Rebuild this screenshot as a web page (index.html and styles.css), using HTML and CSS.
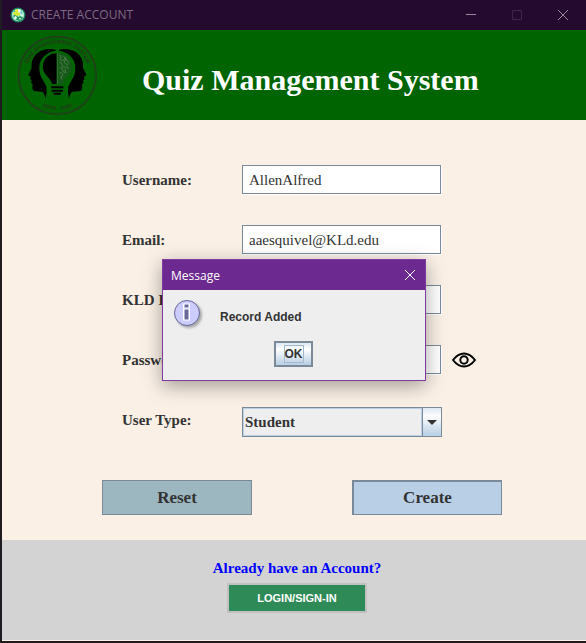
FILE: index.html
```html
<!DOCTYPE html>
<html lang="en">
<head>
<meta charset="utf-8">
<title>Create Account</title>
<link rel="stylesheet" href="styles.css">
</head>
<body>
<div class="window">
  <header class="titlebar">
    <svg class="app-icon" viewBox="0 0 16 16" aria-hidden="true">
      <circle cx="8" cy="8" r="7.5" fill="#16805a"/>
      <circle cx="8" cy="8" r="6.2" fill="#a6e3c8"/>
      <path d="M3 9l3-2 2 3 3-1 2 2-3 3-4-1z" fill="#24965c"/>
      <path d="M4 4l3-2 3 2v4l-3 1-4-2z" fill="#d9ea35"/>
      <path d="M8 2l3 1-1 3-2-1zM5 9l2 1-1 3-2-2zM10 7l3 1-1 2zM9 11l2 0-1 2z" fill="#eefcf8"/>
      <path d="M3 5l2-2v2zM10 4l2 1v2z" fill="#22b5cf"/>
    </svg>
    <span class="titlebar-text">CREATE ACCOUNT</span>
    <div class="window-controls">
      <button type="button" aria-label="Minimize"><svg viewBox="0 0 10 10"><path d="M0 4.5h10"/></svg></button>
      <button type="button" class="dim" aria-label="Maximize" disabled><svg viewBox="0 0 10 10"><path d="M.5.5h9v9h-9z"/></svg></button>
      <button type="button" aria-label="Close"><svg viewBox="0 0 10 10"><path d="M0 0l10 10M10 0L0 10"/></svg></button>
    </div>
  </header>

  <div class="banner">
    <svg class="logo" viewBox="20 10 243 243" role="img" aria-label="Quiz Management System logo">
      <defs>
        <path id="ring-top" d="M45 131a96 96 0 0 1 192 0"/>
        <path id="ring-bottom" d="M37 131a104 104 0 0 0 208 0"/>
        <g id="head">
          <path d="M136 54C112 48 88 54 75 70C64 83 63 97 64 109L54 129Q53 133 61 134L60 143L64 147L62 153L67 158Q64 173 71 178L96 180Q103 185 106 201Q111 181 108 165Q103 154 96 142Q86 128 87 106C88 82 106 61 136 57Z"/>
        </g>
      </defs>
      <circle cx="141" cy="131" r="117" fill="none" stroke="#26391f" stroke-width="4"/>
      <circle cx="141" cy="131" r="113" fill="none" stroke="#154d13" stroke-width="2"/>
      <g class="ring-text">
        <text><textPath href="#ring-top" startOffset="50%" text-anchor="middle">QUIZ MANAGEMENT SYSTEM</textPath></text>
        <text><textPath href="#ring-bottom" startOffset="50%" text-anchor="middle">ESTD · 2022</textPath></text>
      </g>
      <use href="#head"/>
      <use href="#head" transform="matrix(-1 0 0 1 282 0)"/>
      <path d="M139 65C112 66 95 86 98 111C101 130 121 138 125 157H139Z"/>
      <path d="M143 65C170 66 187 86 184 111C181 130 161 138 157 157H143Z" fill="#17591a"/>
      <path d="M147 70q9 3 4 9t4 8q9-2 11-11M170 82q-10 3-8 10t11 6M147 92q8 0 8 8t10 6q9-2 9 6M147 108q11-2 10 7t10 7M147 124q8-4 10 3t-8 9M166 111q-5 6 2 12M154 144v-8M160 74q6 8 16 20" fill="none" stroke="#5c8b55" stroke-width="2"/>
      <path d="M141 65v92" stroke="#4b7948" stroke-width="2"/>
      <path d="M123 164h36v6h-36zM124 174h34v6h-34zM130 183h22v6h-22z"/>
    </svg>
    <h1>Quiz Management System</h1>
  </div>

  <form class="account-form">
    <div class="row"><label for="username">Username:</label><input id="username" type="text" value="AllenAlfred"></div>
    <div class="row"><label for="email">Email:</label><input id="email" type="text" value="aaesquivel@KLd.edu"></div>
    <div class="row"><label for="kld-id">KLD ID:</label><input id="kld-id" type="text"></div>
    <div class="row">
      <label for="password">Password:</label><input id="password" type="password">
      <button class="reveal" type="button" aria-label="Show password">
        <svg viewBox="0 0 26 18"><path d="M2 9Q7 2.500 13 2.500T24 9Q19 15.500 13 15.500T2 9Z"/><circle cx="13" cy="9" r="3.700"/></svg>
      </button>
    </div>
    <div class="row">
      <label for="user-type">User Type:</label>
      <div class="combo">
        <select id="user-type"><option>Student</option></select>
        <span class="combo-arrow"><svg viewBox="0 0 10 5"><path d="M0 0h10L5 5z"/></svg></span>
      </div>
    </div>
    <div class="actions">
      <button type="reset" class="reset">Reset</button>
      <button type="submit" class="create">Create</button>
    </div>
  </form>

  <footer class="footer">
    <p>Already have an Account?</p>
    <button type="button" class="login">LOGIN/SIGN-IN</button>
  </footer>

  <div class="dialog" role="dialog" aria-labelledby="dialog-title">
    <div class="dialog-bar">
      <span id="dialog-title">Message</span>
      <button type="button" aria-label="Close message"><svg viewBox="0 0 10 10"><path d="M0 0l10 10M10 0L0 10"/></svg></button>
    </div>
    <div class="dialog-body">
      <div class="dialog-message">
        <svg class="info" viewBox="0 0 32 32" aria-hidden="true">
          <circle class="info-shadow" cx="16" cy="16" r="13"/>
          <circle cx="14" cy="14" r="12.500" fill="#ccccff" stroke="#666699"/>
          <path d="M10 4.500h7v4.500h-7zM10 9.500h7v12h-7z" fill="#fff"/>
          <path d="M11.500 5.500h4v3h-4zM11.500 10.500h4v10h-4z" fill="#666699"/>
        </svg>
        <p>Record Added</p>
      </div>
      <button type="button" class="ok"><span>OK</span></button>
    </div>
  </div>
</div>
</body>
</html>
```

FILE: styles.css
```css
* {
  box-sizing: border-box;
}

body {
  margin: 0;
  min-height: 100vh;
  background: #1e1c20;
  color: #333;
  font-family: "Liberation Serif", serif;
}

button {
  margin: 0;
  padding: 0;
  border: 0;
  background: none;
  color: inherit;
  font: inherit;
}

svg {
  display: block;
}

p,
h1 {
  margin: 0;
}

.window {
  position: relative;
  margin-left: 2px;
  background: #faf0e6;
  padding-bottom: 1px;
}

.titlebar {
  display: flex;
  align-items: center;
  height: 30px;
  padding-left: 8px;
  background: #240a2e;
  color: #7c6c82;
  font: 12px "Open Sans", sans-serif;
}

.titlebar-text {
  line-height: 16px;
  padding-bottom: 1px;
}

.app-icon {
  width: 16px;
  height: 16px;
  margin-right: 5px;
}

.window-controls {
  display: flex;
  margin-left: auto;
}

.window-controls button {
  display: grid;
  place-items: center;
  width: 46px;
  height: 28px;
}

.window-controls svg,
.dialog-bar svg {
  width: 10px;
  height: 10px;
  fill: none;
  stroke: #94879a;
}

.window-controls .dim svg {
  stroke: #3d2746;
}

.banner {
  display: flex;
  align-items: center;
  gap: 44px;
  height: 90px;
  padding-left: 15px;
  background: #006400;
  color: #fff;
}

.banner h1 {
  font-size: 30px;
  line-height: 36px;
  padding-top: 10px;
}

.logo {
  width: 81px;
  height: 81px;
}

.ring-text {
  fill: #24361c;
  font: bold 16px "Liberation Sans", sans-serif;
}

.account-form {
  padding: 45px 84px 25px 100px;
}

.row {
  display: flex;
  align-items: center;
  height: 30px;
  margin: 0 20px 30px;
  font-size: 15px;
}

.row label {
  flex: 0 0 120px;
  font-weight: bold;
}

.row input {
  width: 199px;
  height: 29px;
  margin: 0 1px 1px 0;
  padding: 2px 6px 0;
  border: 1px solid #7a8a99;
  border-radius: 0;
  background: #fff;
  box-shadow: 1px 1px #fff;
  color: #333;
  font: 15px "Liberation Serif", serif;
}

.reveal {
  margin-left: 9px;
}

.reveal svg {
  width: 26px;
  height: 18px;
  fill: none;
  stroke: #000;
  stroke-width: 2;
}

.combo {
  display: grid;
  grid-template-columns: 1fr 19px;
  width: 200px;
  height: 30px;
  margin-top: 4px;
  border: 1px solid #7a8a99;
}

.combo select {
  appearance: none;
  min-width: 0;
  padding: 0 1px;
  border: 1px solid #b8cfe5;
  border-radius: 0;
  background: #eee;
  color: #333;
  font: bold 15px "Liberation Serif", serif;
}

.combo-arrow {
  display: grid;
  place-items: center;
  border-left: 1px solid #7a8a99;
  background: linear-gradient(#dde8f3, #fff 30%, #dde8f3 60%, #b8cfe5);
  pointer-events: none;
}

.combo-arrow svg {
  width: 10px;
  height: 5px;
  fill: #333;
}

.actions {
  display: flex;
  gap: 100px;
  padding-top: 15px;
}

.actions button {
  width: 150px;
  height: 35px;
  border: 1px solid #7a8a99;
  font-size: 17px;
  font-weight: bold;
}

.actions .reset {
  background: #9cb7bf;
}

.actions .create {
  border-width: 2px 1px 1px 2px;
  background: #b8cfe5;
}

.footer {
  display: flex;
  flex-direction: column;
  align-items: center;
  height: 100px;
  padding: 18px 0 0 6px;
  background: #d3d3d3;
}

.footer p {
  color: #00f;
  font-size: 15px;
  font-weight: bold;
  line-height: 20px;
}

.login {
  width: 140px;
  height: 30px;
  margin-top: 5px;
  border: 2px solid #c0c0c0;
  background: #2e8b57;
  color: #fff;
  font: bold 11px "Liberation Sans", sans-serif;
}

.dialog {
  position: absolute;
  top: 259px;
  left: 160px;
  width: 264px;
  border: 1px solid #7e3aa0;
  background: #eee;
  box-shadow: 0 5px 18px rgba(0, 0, 0, 0.35);
}

.dialog-bar {
  display: flex;
  align-items: center;
  justify-content: space-between;
  height: 30px;
  padding: 0 10px 0 8px;
  background: #6c2990;
  color: #fff;
  font: 12px "Open Sans", sans-serif;
}

.dialog-bar svg {
  stroke: #fff;
}

.dialog-body {
  display: flex;
  flex-direction: column;
  height: 90px;
  padding: 9px 11px 9px 10px;
  font: bold 12px "Liberation Sans", sans-serif;
}

.dialog-message {
  display: flex;
  align-items: center;
  gap: 15px;
}

.dialog-message p {
  padding-top: 3px;
}

.info {
  width: 32px;
  height: 32px;
}

.info-shadow {
  fill: #aaa;
  filter: blur(1px);
}

.ok {
  display: grid;
  place-items: center;
  align-self: center;
  width: 39px;
  height: 26px;
  margin-top: 10px;
  border: 2px solid #7a8a99;
  background: linear-gradient(#dde8f3, #fff 30%, #dde8f3 60%, #b8cfe5);
}

.ok span {
  border: 1px solid #a3b8cc;
  line-height: 16px;
}
```
